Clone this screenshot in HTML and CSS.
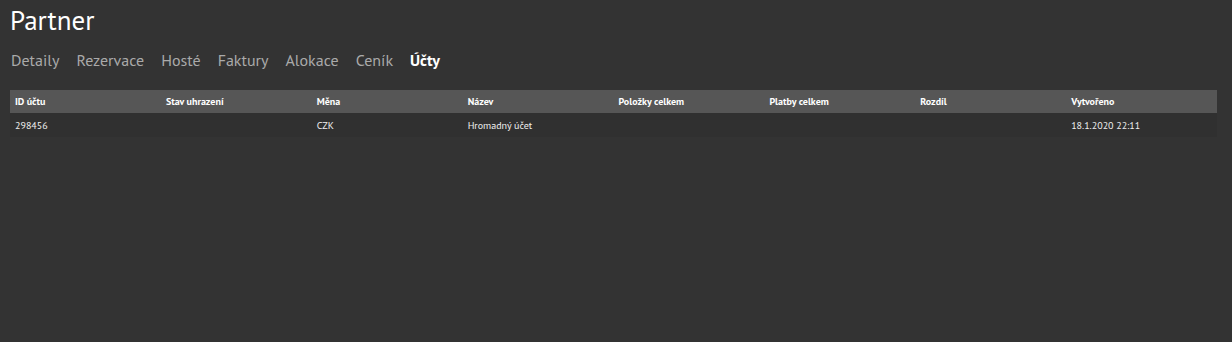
FILE: index.html
```html
<!DOCTYPE html>
<html lang="cs">
<head>
  <meta charset="UTF-8">
  <meta name="viewport" content="width=device-width, initial-scale=1.0">
  <title>Partner</title>
  <link rel="stylesheet" href="styles.css">
</head>
<body>
  <h1>Partner</h1>

  <nav class="tabs">
    <a href="#">Detaily</a>
    <a href="#">Rezervace</a>
    <a href="#">Hosté</a>
    <a href="#">Faktury</a>
    <a href="#">Alokace</a>
    <a href="#">Ceník</a>
    <a href="#" class="active">Účty</a>
  </nav>

  <table class="accounts">
    <thead>
      <tr>
        <th>ID účtu</th>
        <th>Stav uhrazení</th>
        <th>Měna</th>
        <th>Název</th>
        <th>Položky celkem</th>
        <th>Platby celkem</th>
        <th>Rozdíl</th>
        <th>Vytvořeno</th>
      </tr>
    </thead>
    <tbody>
      <tr>
        <td>298456</td>
        <td></td>
        <td>CZK</td>
        <td>Hromadný účet</td>
        <td></td>
        <td></td>
        <td></td>
        <td>18.1.2020 22:11</td>
      </tr>
    </tbody>
  </table>
</body>
</html>
```

FILE: styles.css
```css
body {
  font-family: "PT Sans", "Open Sans", sans-serif;
  background-color: #333333;
  color: #ffffff;
  margin: 0;
  padding: 0 15px 0 10px;
}
h1 {
  font-size: 27px;
  font-weight: normal;
  margin: 0;
  padding-top: 4px;
  line-height: 32px;
}
.tabs {
  display: flex;
  gap: 17px;
  margin-top: 12px;
  height: 24px;
  align-items: center;
  padding-left: 1px;
}
.tabs a {
  color: #aaaaaa;
  text-decoration: none;
  font-size: 16px;
}
.tabs a.active {
  color: #ffffff;
  font-weight: 600;
}
.accounts {
  width: 100%;
  margin-top: 18px;
  border-collapse: collapse;
  table-layout: fixed;
  font-size: 10px;
}
.accounts th,
.accounts td {
  text-align: left;
  padding: 0 5px;
}
.accounts th {
  background-color: #565656;
  font-weight: bold;
  height: 23px;
}
.accounts td {
  background-color: #303030;
  height: 24px;
  color: #f0f0f0;
}
```
